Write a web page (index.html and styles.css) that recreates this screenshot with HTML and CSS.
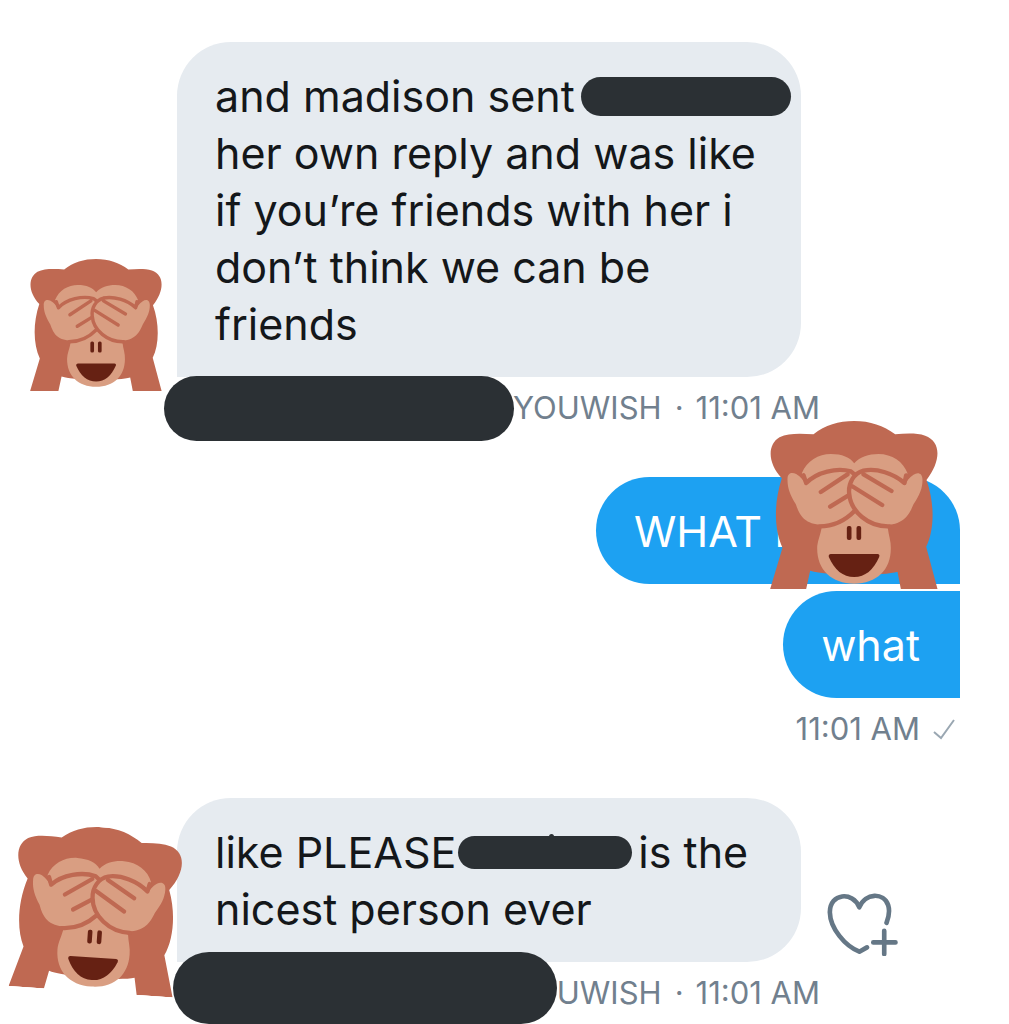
FILE: index.html
```html
<!DOCTYPE html>
<html lang="en">
<head>
    <meta charset="UTF-8" />
    <meta name="viewport" content="width=device-width, initial-scale=1.0" />
    <title>Messages</title>
    <link rel="stylesheet" href="styles.css">
</head>
<body>
    <svg class="sprite" aria-hidden="true">
        <symbol id="monkey" viewBox="30 33 503 504">
            <path fill="#bf6952" d="M160 73C195 45 235 33 282 33C330 33 370 47 405 73C440 70 470 69 495 77C545 95 542 155 499 210C524 280 523 360 498 410L532 537H422L412 485C370 498 200 498 150 482L138 537H30L67 413C42 360 40 280 65 205C23 160 20 105 58 82C85 69 120 71 160 73Z"/>
            <path fill="#d99e82" d="M125 190C140 152 175 132 212 132C245 132 270 142 282 160C300 140 325 132 355 132C395 132 430 155 442 190L432 225L282 205L138 225Z"/>
            <path fill="#d99e82" d="M282 303L383 355C385 375 393 395 392 415C392 480 350 521 282 521C214 521 171 480 171 415C171 395 181 375 185 350Z"/>
            <path fill="#d99e82" d="M82 210C81 188 95 186 108 192C122 200 131 212 138 226C170 190 230 172 268 184C285 190 300 240 282 300C255 327 230 341 196 345C135 345 120 320 107 283C90 255 82 235 82 210Z"/>
            <path class="fur-line" d="M130 196L138 219C170 186 230 172 272 184L284 194M262 193L182 246M265 256L210 290M178 349C220 349 255 332 283 303"/>
            <path fill="#d99e82" d="M487 210C487 188 472 186 460 194C447 203 440 213 433 226C400 195 350 175 310 182C280 188 264 215 267 250C271 310 320 347 372 345C430 345 447 315 460 283C478 255 487 235 487 210Z"/>
            <path class="fur-line" d="M438 196L433 219C400 190 350 174 310 182C280 190 264 220 267 250C271 305 325 351 388 349M310 193L394 243M275 228L366 285"/>
            <path fill="#662113" d="M212 432H352Q360 433 357 441C340 480 315 501 282 501C248 501 223 480 206 441Q204 433 212 432Z"/>
            <rect fill="#662113" x="260" y="348" width="14" height="42" rx="6"/>
            <rect fill="#662113" x="289" y="348" width="14" height="42" rx="6"/>
        </symbol>
    </svg>

    <main class="chat">
        <section class="message received">
            <svg class="monkey monkey-first" role="img" aria-label="Hidden avatar"><use href="#monkey"/></svg>
            <div class="row">
                <p class="bubble"><span>and madison sent</span><span class="redact redact-name"></span> <span>her own reply and was like if you’re friends with her i don’t think we can be friends</span></p>
            </div>
            <div class="meta"><span>YOUWISH</span><span class="dot">·</span><time>11:01 AM</time></div>
            <span class="bar bar-first"></span>
        </section>

        <section class="message sent">
            <p class="bubble bubble-top">WHAT I DONE</p>
            <p class="bubble bubble-last">what</p>
            <div class="meta">
                <time>11:01 AM</time>
                <svg class="check" viewBox="0 0 24 22" role="img" aria-label="Sent"><path d="M2 14L9 20L22 2"/></svg>
            </div>
            <svg class="monkey monkey-over" role="img" aria-label="See-no-evil monkey"><use href="#monkey"/></svg>
        </section>

        <section class="message received">
            <div class="row">
                <p class="bubble"><span>like PLEASE</span><span class="redact redact-word"></span><span>is the</span> <span>nicest person ever</span></p>
                <button class="react" type="button" aria-label="Add reaction">
                    <svg viewBox="51 38 213 190"><path d="M230 128C237 110 240 91 235 75C222 36 166 36 148 81C128 32 59 38 59 96C60 145 105 198 148 215L171 202M223 152V222M190 187H257"/></svg>
                </button>
            </div>
            <div class="meta"><span>YOUWISH</span><span class="dot">·</span><time>11:01 AM</time></div>
            <span class="bar bar-second"></span>
            <svg class="monkey monkey-tilted" role="img" aria-label="Hidden avatar"><use href="#monkey"/></svg>
        </section>
    </main>
</body>
</html>
```
FILE: styles.css
```css
* {
    box-sizing: border-box;
    margin: 0;
    padding: 0;
}

body {
    background: #fff;
    color: #14171a;
    font-family: Inter, "Liberation Sans", sans-serif;
    font-size: 43px;
    line-height: 57px;
}

.sprite {
    position: absolute;
    width: 0;
    height: 0;
}

.chat {
    display: flex;
    flex-direction: column;
    gap: 49px;
    padding: 42px 49px 11px 0;
}

.message {
    position: relative;
}

.received {
    padding-left: 177px;
}

.sent {
    display: flex;
    flex-direction: column;
    align-items: flex-end;
    gap: 7px;
}

.row {
    display: flex;
    align-items: flex-end;
    gap: 26px;
}

.bubble {
    max-width: 624px;
    padding: 26px 40px 24px 38px;
    border-radius: 54px 54px 54px 0;
    background: #e6ebf0;
}

.sent .bubble {
    background: #1da1f2;
    color: #fff;
}

.sent .bubble-top {
    border-radius: 54px 54px 0 54px;
}

.sent .bubble-last {
    border-radius: 54px 0 0 54px;
}

.meta {
    display: flex;
    justify-content: flex-end;
    max-width: 643px;
    margin-top: 11px;
    color: #71808e;
    font-size: 31px;
    line-height: 40px;
}

.sent .meta {
    align-items: center;
    gap: 12px;
    margin: 4px 4px 0 0;
}

.dot {
    margin: 0 12px 0 13px;
}

.check {
    width: 24px;
    height: 22px;
    fill: none;
    stroke: #9aa7b2;
    stroke-width: 2;
}

.redact, .bar {
    background: #2b3034;
}

.redact {
    position: relative;
    display: inline-block;
    border-radius: 20px;
}

.redact-name {
    width: 210px;
    height: 39px;
    margin: 0 -30px 0 6px;
    vertical-align: -4px;
}

.redact-word {
    width: 174px;
    height: 33px;
    margin: 0 6px 0 2px;
    vertical-align: -1px;
}

.redact-word::before {
    content: "";
    position: absolute;
    top: -2px;
    left: 91px;
    width: 5px;
    height: 5px;
    border-radius: 50%;
    background: #2b3034;
}

.bar {
    position: absolute;
    border-radius: 36px;
}

.bar-first {
    left: 164px;
    bottom: -13px;
    width: 350px;
    height: 65px;
}

.bar-second {
    left: 173px;
    bottom: -11px;
    width: 384px;
    height: 72px;
}

.monkey {
    position: absolute;
}

.fur-line {
    fill: none;
    stroke: #bf6952;
    stroke-width: 13;
    stroke-linecap: round;
    stroke-linejoin: round;
}

.monkey-first {
    left: 30px;
    bottom: 37px;
    width: 132px;
    height: 132px;
}

.monkey-over {
    top: -56px;
    right: 22px;
    width: 168px;
    height: 168px;
}

.monkey-tilted {
    left: 14px;
    top: 29px;
    width: 165px;
    height: 165px;
    transform: rotate(4deg);
}

.react {
    flex: none;
    width: 71px;
    height: 63px;
    margin-bottom: 6px;
    border: 0;
    background: none;
    cursor: pointer;
}

.react svg {
    display: block;
    width: 100%;
    height: 100%;
    fill: none;
    stroke: #657786;
    stroke-width: 14;
    stroke-linecap: round;
    stroke-linejoin: round;
}
```
